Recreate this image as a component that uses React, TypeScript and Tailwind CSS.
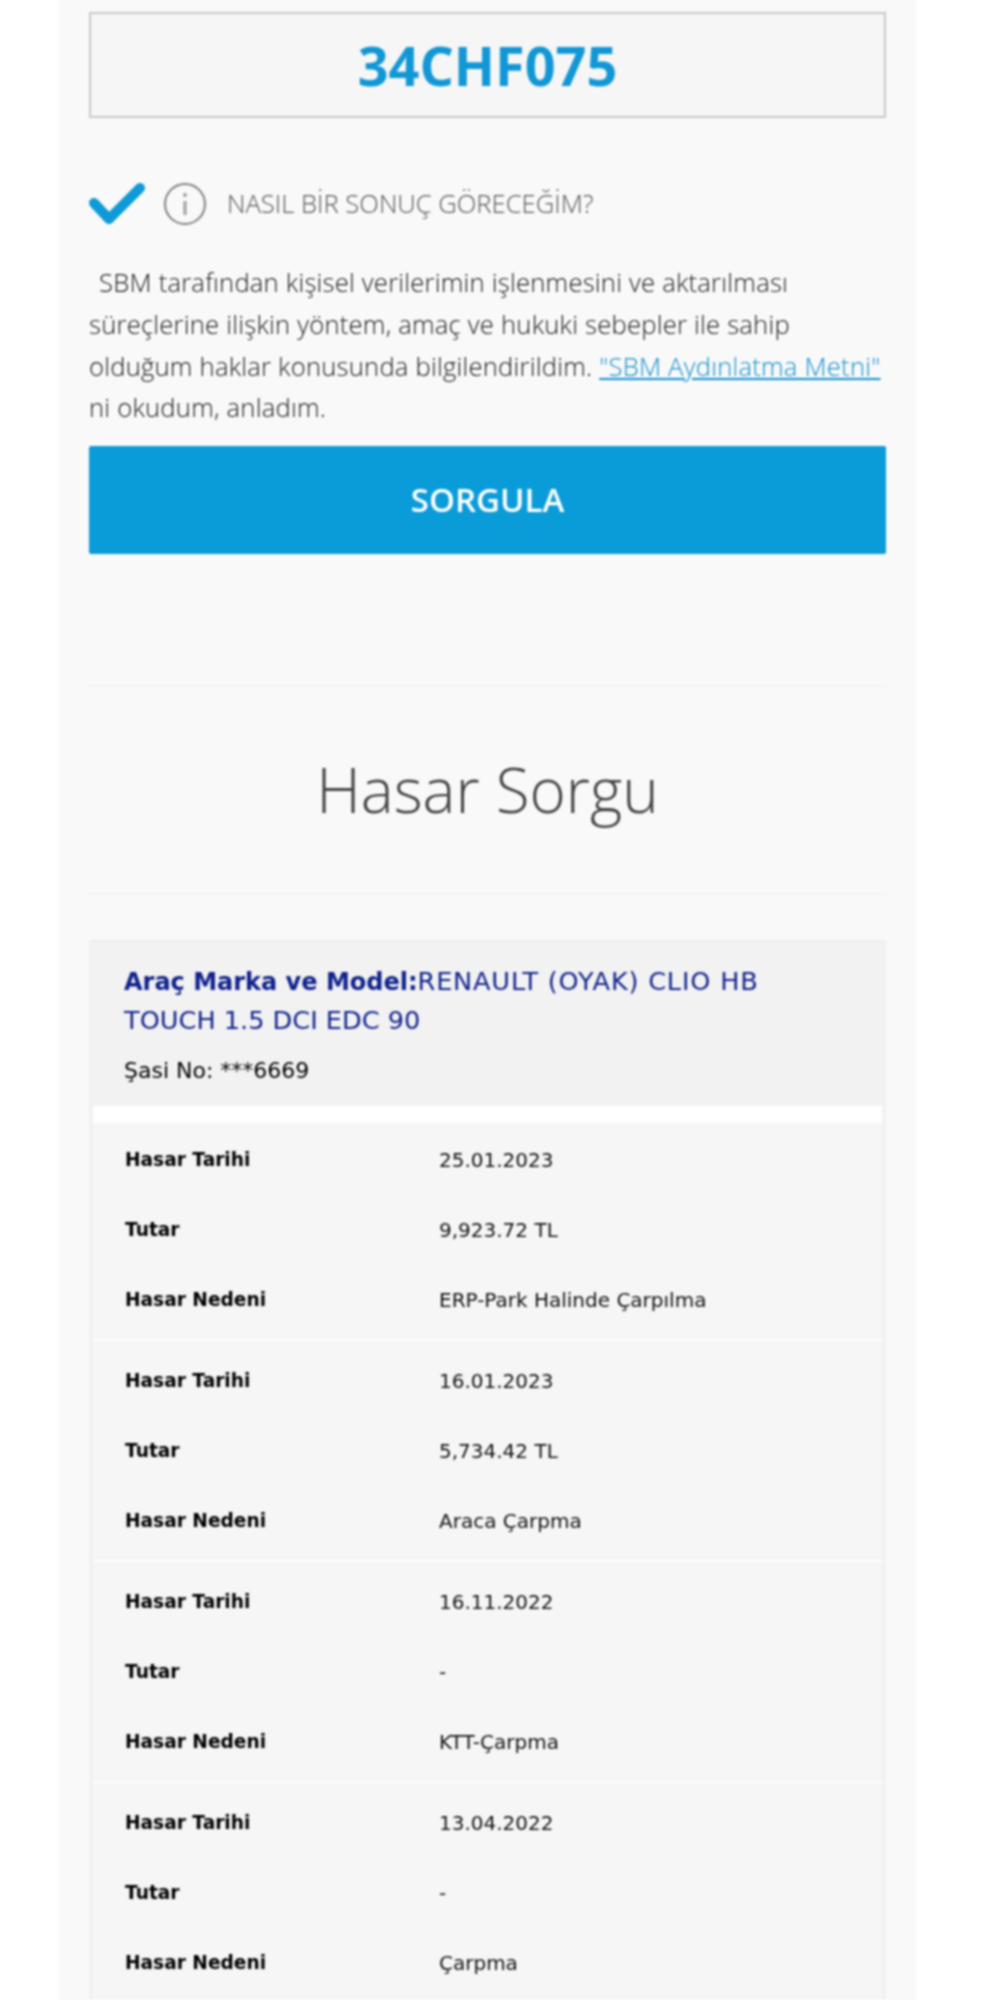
const sans = "font-['Open_Sans','Noto_Sans',sans-serif]";
const dj = "font-['DejaVu_Sans','Liberation_Sans',sans-serif]";

const claims = [
  { date: "25.01.2023", amount: "9,923.72 TL", cause: "ERP-Park Halinde Çarpılma" },
  { date: "16.01.2023", amount: "5,734.42 TL", cause: "Araca Çarpma" },
  { date: "16.11.2022", amount: "-", cause: "KTT-Çarpma" },
  { date: "13.04.2022", amount: "-", cause: "Çarpma" },
];

function Row({ label, value }: { label: string; value: string }) {
  return (
    <div className="flex h-[70px] items-center pl-[33px] text-[20px] text-[#111]">
      <div className="w-[314px] text-[18.6px] font-bold text-black">{label}</div>
      <div>{value}</div>
    </div>
  );
}

export default function App() {
  return (
    <div className="h-[2000px] overflow-hidden bg-white blur-[0.8px]">
      <div className={`ml-[59px] h-full w-[857px] bg-[#f9f9f9] px-[30px] pt-[12px] ${sans}`}>
        <div className="flex h-[106px] items-center justify-center border-2 border-[#c8c8c8] bg-[#f6f6f6] text-[54px] font-bold text-[#1297d6]">
          34CHF075
        </div>

        <div className="mt-[64px] flex h-[44px] items-center">
          <svg width="56" height="44" viewBox="0 0 56 44" className="shrink-0">
            <path d="M5 21 L20 37 L51 6" fill="none" stroke="#0e9ad8" strokeWidth="10" strokeLinecap="round" strokeLinejoin="round" />
          </svg>
          <svg width="44" height="44" viewBox="0 0 44 44" className="ml-[18px] shrink-0">
            <circle cx="22" cy="22" r="20" fill="none" stroke="#808080" strokeWidth="2" />
            <rect x="20.5" y="19" width="3" height="14" fill="#a0a0a0" />
            <circle cx="22" cy="13" r="2" fill="#a0a0a0" />
          </svg>
          <span className="ml-[20px] text-[25.6px] font-light text-[#555]">NASIL BİR SONUÇ GÖRECEĞİM?</span>
        </div>

        <p className="mt-[36px] whitespace-nowrap text-[25.6px] leading-[41.8px] font-light tracking-[0.22px] text-[#1a1a1a]">
          <span className="ml-[10px]">SBM tarafından kişisel verilerimin işlenmesini ve aktarılması</span>
          <br />
          süreçlerine ilişkin yöntem, amaç ve hukuki sebepler ile sahip
          <br />
          olduğum haklar konusunda bilgilendirildim. <a className="text-[#0f8fd0] underline">"SBM Aydınlatma Metni"</a>
          <br />
          ni okudum, anladım.
        </p>

        <button className="mt-[17px] flex h-[108px] w-full items-center justify-center rounded-[2px] bg-[#0a9bd9] text-[33px] font-semibold text-white">
          SORGULA
        </button>

        <div className="mt-[131px] border-t border-[#f1f1f1]" />
        <h2 className="flex h-[207px] items-center justify-center text-[62px] font-light text-[#444]">Hasar Sorgu</h2>
        <div className="border-t border-[#f1f1f1]" />

        <div className={`mt-[46px] border-x-4 border-[#f1f1f1] ${dj}`}>
          <div className="h-[166px] border-t-2 border-[#ebebeb] bg-[#f2f2f2] pl-[31px] pt-[20px]">
            <div className="text-[25.6px] leading-[38px] text-[#10228c]">
              <b className="text-[24px]">Araç Marka ve Model:</b>
              <span className="tracking-[0.8px]">RENAULT (OYAK) CLIO HB</span>
              <br />
              TOUCH 1.5 DCI EDC 90
            </div>
            <div className="mt-[19px] text-[22px] leading-[26px] text-black">Şasi No: ***6669</div>
          </div>
          <div className="h-[17px] bg-white" />
          {claims.map((c) => (
            <div key={c.date} className="h-[221px] bg-[#f6f6f6] pt-[2px]">
              <div className="-ml-[1px]">
                <Row label="Hasar Tarihi" value={c.date} />
                <Row label="Tutar" value={c.amount} />
                <Row label="Hasar Nedeni" value={c.cause} />
              </div>
              <div className="mt-[2px] h-[4px] border-t border-[#efefef] bg-[#fcfcfc]" />
            </div>
          ))}
        </div>
      </div>
    </div>
  );
}
